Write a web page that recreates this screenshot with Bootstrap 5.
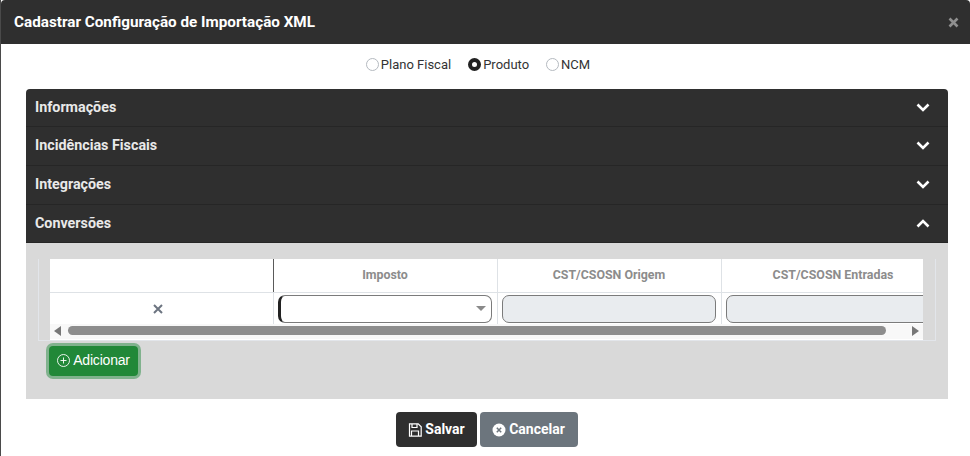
<!DOCTYPE html>
<html lang="pt-BR">
<head>
  <meta charset="UTF-8" />
  <meta name="viewport" content="width=device-width, initial-scale=1" />
  <title>Cadastrar Configuração de Importação XML</title>
  <link href="https://cdn.jsdelivr.net/npm/bootstrap@5.3.0/dist/css/bootstrap.min.css" rel="stylesheet" />
  <style>
    html, body { height: 456px; overflow: hidden; }
    body { background: #4a4a4a; font-family: Roboto, "Liberation Sans", sans-serif; }
    .janela { height: 456px; margin-left: 1px; background: #fff; display: flex; flex-direction: column; }
    .topo { height: 44px; padding: 0 11px 0 13px; background: #2f2f2f; color: #fff; border-radius: 4px 4px 0 0; }
    .topo-titulo { font-size: 15.25px; font-weight: 700; }
    .fechar { color: #8f8f8f; line-height: 0; }
    .tipos { height: 45px; padding: 0 15px 4px 0; font-size: 13px; color: #333; gap: 17px; }
    .tipos .form-check-input { width: 13px; height: 13px; margin: 0 2px 0 0; float: none; border-color: #b5bac0; }
    .tipos .form-check-input:checked { background-color: #fff; border: 4px solid #222; background-image: none; }
    .tipos .form-check { padding: 0; margin: 0; min-height: 0; display: flex; align-items: center; }
    .sanfona { margin: 0 22px 0 25px; }
    .sanfona-item { height: 39px; padding: 0 18px 0 9px; background: #2f2f2f; color: #e9e9e9; font-size: 14.3px; font-weight: 700; border-bottom: 1px solid #262626; }
    .sanfona-item:first-child { border-radius: 4px 4px 0 0; height: 38px; }
    .sanfona-item:nth-child(2), .sanfona-item:nth-child(3) { padding-bottom: 1px; }
    .sanfona-item:nth-child(4) { height: 38px; }
    .sanfona-corpo { height: 156px; background: #d9d9d9; padding: 16px 11px 0 12px; }
    .grade-caixa { height: 82px; border: 1px solid #e2e5ea; border-top: 0; padding: 0 0 0 11px; width: 898px; }
    .grade-area { width: 873px; height: 81px; background: #fff; overflow: hidden; display: flex; flex-direction: column; }
    .grade { width: 895px; table-layout: fixed; border-collapse: collapse; margin: 0; }
    .grade th { height: 33px; font-size: 12.4px; font-weight: 700; color: #8c8c8c; text-align: center; vertical-align: middle; border-right: 1px solid #dee2e6; border-bottom: 1px solid #dee2e6; padding: 1px 0 0; white-space: nowrap; }
    .grade td { height: 34px; padding: 0 5px 0 4px; border-right: 1px solid #dee2e6; vertical-align: middle; }
    .grade th.col-acao { border-right-color: #5a5a5a; }
    .col-acao { width: 223px; }
    .col-campo { width: 224px; }
    .excluir { line-height: 0; text-align: center; }
    .grade td.excluir { padding-right: 11px; }
    .campo { height: 28px; border: 1px solid #7b7b7b; border-radius: 7px; }
    .campo-select { background: #fff; border-left: 3px solid #222; position: relative; }
    .campo-select::after { content: ""; position: absolute; right: 5px; top: 10px; border: 5px solid transparent; border-top: 5px solid #8a8a8a; border-bottom: 0; }
    .campo-off { background: #e9ecef; }
    .barra { height: 15px; margin-top: -2px; background: #f8f8f8; padding: 0 4px 2px 4px; gap: 7px; }
    .seta-e { border: 5px solid transparent; border-right: 7px solid #777; border-left: 0; }
    .seta-d { border: 5px solid transparent; border-left: 7px solid #777; border-right: 0; }
    .polegar { width: 818px; height: 9px; background: #8d8d8d; border-radius: 5px; margin-right: auto; }
    .btn-adicionar { margin: 5px 0 0 11px; width: 89px; height: 30px; padding: 0 0 2px; background: #218838; color: #fff; font-size: 14px; font-family: "Liberation Sans", sans-serif; letter-spacing: -.2px; border: 0; border-radius: 4px; box-shadow: 0 0 0 3px rgba(40, 140, 65, .5); gap: 3px; }
    .btn-adicionar:hover { background: #218838; color: #fff; }
    .rodape { flex: 1; gap: 3px; padding: 13px 0 0 3px; align-items: flex-start; }
    .btn-acao { height: 35px; font-size: 14px; font-weight: 700; color: #fff; border: 0; border-radius: 4px; padding: 0; gap: 3px; }
    .btn-salvar { width: 81px; background: #2f2f2f; }
    .btn-cancelar { width: 98px; padding-right: 1px; background: #6c757d; }
  </style>
</head>
<body>
  <div class="janela">
    <div class="topo d-flex align-items-center justify-content-between">
      <span class="topo-titulo">Cadastrar Configuração de Importação XML</span>
      <span class="fechar">
        <svg width="11" height="11" viewBox="0 0 11 11"><path d="M1.500 1.500l8 8M9.500 1.500l-8 8" stroke="currentColor" stroke-width="2.600" /></svg>
      </span>
    </div>

    <div class="tipos d-flex align-items-center justify-content-center">
      <div class="form-check"><input class="form-check-input" type="radio" name="tipo" id="tipoPlano" /><label for="tipoPlano">Plano Fiscal</label></div>
      <div class="form-check"><input class="form-check-input" type="radio" name="tipo" id="tipoProduto" checked /><label for="tipoProduto">Produto</label></div>
      <div class="form-check"><input class="form-check-input" type="radio" name="tipo" id="tipoNcm" /><label for="tipoNcm">NCM</label></div>
    </div>

    <div class="sanfona">
      <div class="sanfona-item d-flex align-items-center justify-content-between">
        <span>Informações</span>
        <svg width="14" height="9" viewBox="0 0 14 9"><path d="M1.500 1.500L7 7l5.500-5.500" fill="none" stroke="#fff" stroke-width="2.600" /></svg>
      </div>
      <div class="sanfona-item d-flex align-items-center justify-content-between">
        <span>Incidências Fiscais</span>
        <svg width="14" height="9" viewBox="0 0 14 9"><path d="M1.500 1.500L7 7l5.500-5.500" fill="none" stroke="#fff" stroke-width="2.600" /></svg>
      </div>
      <div class="sanfona-item d-flex align-items-center justify-content-between">
        <span>Integrações</span>
        <svg width="14" height="9" viewBox="0 0 14 9"><path d="M1.500 1.500L7 7l5.500-5.500" fill="none" stroke="#fff" stroke-width="2.600" /></svg>
      </div>
      <div class="sanfona-item d-flex align-items-center justify-content-between">
        <span>Conversões</span>
        <svg width="14" height="9" viewBox="0 0 14 9"><path d="M1.500 7.500L7 2l5.500 5.500" fill="none" stroke="#fff" stroke-width="2.600" /></svg>
      </div>
      <div class="sanfona-corpo">
        <div class="grade-caixa">
          <div class="grade-area">
            <table class="grade">
              <colgroup><col class="col-acao" /><col class="col-campo" /><col class="col-campo" /><col class="col-campo" /></colgroup>
              <tr>
                <th class="col-acao"></th>
                <th>Imposto</th>
                <th>CST/CSOSN Origem</th>
                <th>CST/CSOSN Entradas</th>
              </tr>
              <tr>
                <td class="excluir">
                  <svg width="10" height="10" viewBox="0 0 10 10"><path d="M1 1l8 8M9 1l-8 8" stroke="#6c7480" stroke-width="2" /></svg>
                </td>
                <td><div class="campo campo-select"></div></td>
                <td><div class="campo campo-off"></div></td>
                <td><div class="campo campo-off"></div></td>
              </tr>
            </table>
            <div class="barra d-flex align-items-center">
              <span class="seta-e"></span>
              <span class="polegar"></span>
              <span class="seta-d"></span>
            </div>
          </div>
        </div>
        <button type="button" class="btn btn-adicionar d-flex align-items-center justify-content-center">
          <svg width="13" height="13" viewBox="0 0 13 13"><circle cx="6.500" cy="6.500" r="6" fill="none" stroke="#fff" stroke-width=".9" /><path d="M6.500 3.500v6M3.500 6.500h6" stroke="#fff" stroke-width=".9" /></svg>
          Adicionar
        </button>
      </div>
    </div>

    <div class="rodape d-flex justify-content-center">
      <button type="button" class="btn btn-acao btn-salvar d-flex align-items-center justify-content-center">
        <svg width="14" height="14" viewBox="0 0 14 14"><path d="M1.500.8h8.700l3 3v9.400h-11.700z" fill="none" stroke="#fff" stroke-width="1.200" /><path d="M4 1v3.500h5V1M3.500 13V8h7v5" fill="none" stroke="#fff" stroke-width="1.200" /></svg>
        Salvar
      </button>
      <button type="button" class="btn btn-acao btn-cancelar d-flex align-items-center justify-content-center">
        <svg width="14" height="14" viewBox="0 0 14 14"><circle cx="7" cy="7" r="6.500" fill="#fff" /><path d="M4.800 4.800l4.400 4.400M9.200 4.800l-4.400 4.400" stroke="#6c757d" stroke-width="1.500" /></svg>
        Cancelar
      </button>
    </div>
  </div>
</body>
</html>
